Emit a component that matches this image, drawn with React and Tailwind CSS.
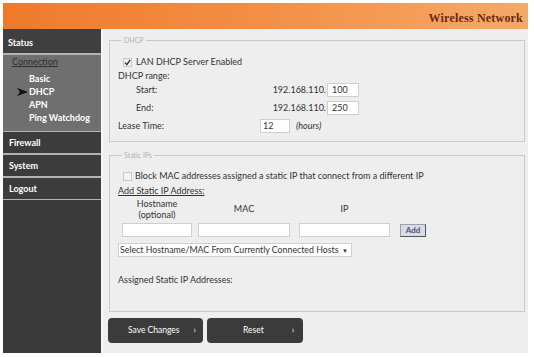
export default function App() {
  const Check = ({ checked }) => (
    <span className="w-[9px] h-[9px] border border-[#c8c8c8] bg-[#f2f2f2] flex items-center justify-center shrink-0">
      {checked && (
        <svg width="7" height="7" viewBox="0 0 7 7">
          <path d="M1 3.6 L2.8 5.6 L6.2 0.8" stroke="#333" strokeWidth="1.4" fill="none" />
        </svg>
      )}
    </span>
  );
  const Box = ({ className, children }) => (
    <div className={"bg-white border border-[#cfcfcf] h-[14px] flex items-center " + className}>{children}</div>
  );
  return (
    <div className="w-[534px] h-[357px] bg-white pt-[3px] pl-[3px] font-['Lato',sans-serif] text-[#333] text-[9px]">
      <div className="w-[525px] h-[350px] flex flex-col">
        <header className="h-[26px] shrink-0 bg-gradient-to-r from-[#ef7a2b] via-[#f38f45] to-[#f5a967] flex items-center justify-end pr-[5px] pt-[3px]">
          <span className="font-['Liberation_Serif',serif] font-bold text-[12px] text-[#6b2a12] tracking-[0.2px]">Wireless Network</span>
        </header>
        <div className="flex flex-1 min-h-0">
          <aside className="w-[98px] bg-[#3a3a3a] flex flex-col font-bold text-white">
            <div className="h-[24px] bg-[#3f3f3f] flex items-center pl-[5px] pt-[3px]">Status</div>
            <div className="h-[2px] bg-[#b3b3b3]" />
            <div className="h-[76px] bg-[#6f6f6f] pt-[1px]">
              <div className="leading-[12px] pl-[9px] font-normal text-[#2e2e2e] underline">Connection</div>
              <div className="mt-[4px] leading-[13px]">
                <div className="pl-[26px]">Basic</div>
                <div className="flex items-center pl-[14px]">
                  <svg width="11" height="8" viewBox="0 0 11 8" className="mr-[1px]">
                    <path d="M0 0 L11 4 L0 8 L3 4 Z" fill="#111" />
                  </svg>
                  <span>DHCP</span>
                </div>
                <div className="pl-[26px]">APN</div>
                <div className="pl-[26px]">Ping Watchdog</div>
              </div>
            </div>
            <div className="h-[1px] bg-[#b3b3b3]" />
            <div className="h-[21px] bg-[#3c3c3c] flex items-center pl-[6px]">Firewall</div>
            <div className="h-[2px] bg-[#b3b3b3]" />
            <div className="h-[21px] bg-[#3c3c3c] flex items-center pl-[6px]">System</div>
            <div className="h-[2px] bg-[#b3b3b3]" />
            <div className="h-[21px] bg-[#3c3c3c] flex items-center pl-[6px]">Logout</div>
            <div className="h-[1px] bg-[#b3b3b3]" />
          </aside>
          <div className="w-[2px] bg-[#f7f7f7]" />
          <main className="flex-1 bg-[#eeeeee] pl-[6px] pr-[3px] pt-[6px]">
            <fieldset className="border border-[#c9c9c9] pl-[8px] pb-[8px]">
              <legend className="ml-[4px] px-[2px] text-[7px] leading-[10px] text-[#b3b3b3]">DHCP</legend>
              <div className="mt-[10px] h-[14px] flex items-center pl-[5px]">
                <Check checked />
                <span className="ml-[4px]">LAN DHCP Server Enabled</span>
              </div>
              <div className="h-[13px] flex items-center">DHCP range:</div>
              <div className="mt-[1px] h-[14px] flex items-center">
                <div className="w-[209px] flex justify-between pl-[18px] pr-[1px]">
                  <span>Start:</span>
                  <span>192.168.110.</span>
                </div>
                <Box className="w-[32px] pl-[4px]">100</Box>
              </div>
              <div className="mt-[4px] h-[14px] flex items-center">
                <div className="w-[209px] flex justify-between pl-[18px] pr-[1px]">
                  <span>End:</span>
                  <span>192.168.110.</span>
                </div>
                <Box className="w-[32px] pl-[4px]">250</Box>
              </div>
              <div className="mt-[4px] h-[14px] flex items-center">
                <div className="w-[142px]">Lease Time:</div>
                <Box className="w-[30px] pl-[2px]">12</Box>
                <span className="ml-[6px] italic">(hours)</span>
              </div>
            </fieldset>
            <fieldset className="mt-[8px] border border-[#c9c9c9] pl-[8px] pb-[25px]">
              <legend className="ml-[4px] px-[2px] text-[7px] leading-[10px] text-[#b3b3b3]">Static IPs</legend>
              <div className="mt-[9px] h-[14px] flex items-center pl-[5px]">
                <Check />
                <span className="ml-[3px]">Block MAC addresses assigned a static IP that connect from a different IP</span>
              </div>
              <div className="mt-[1px] h-[13px] flex items-center underline">Add Static IP Address:</div>
              <div className="h-[23px] flex items-center pl-[4px] text-center">
                <div className="w-[70px] leading-[11px]">Hostname<br />(optional)</div>
                <div className="ml-[6px] w-[92px]">MAC</div>
                <div className="ml-[9px] w-[91px]">IP</div>
              </div>
              <div className="mt-[3px] h-[14px] flex items-center pl-[4px]">
                <Box className="w-[70px]" />
                <Box className="ml-[6px] w-[92px]" />
                <Box className="ml-[9px] w-[91px]" />
                <div className="ml-[10px] w-[26px] h-[13px] bg-[#d9dce4] border border-[#9aa0ac] border-r-[#555] border-b-[#555] text-[#4a5673] font-bold text-[8px] flex items-center justify-center">Add</div>
              </div>
              <div className="mt-[6px] w-[234px] h-[14px] bg-white border border-[#d0d0d0] flex items-center justify-between pl-[1px] pr-[3px] text-[8.8px]">
                <span>Select Hostname/MAC From Currently Connected Hosts</span>
                <span className="text-[6px]">▼</span>
              </div>
              <div className="mt-[17px] h-[12px] flex items-center">Assigned Static IP Addresses:</div>
            </fieldset>
            <div className="mt-[6px] -ml-[1px] flex gap-[4px] text-white text-[8.5px]">
              <div className="w-[95px] h-[25px] rounded-[4px] bg-[#3b3b3b] flex items-center pl-[20px]">
                <span>Save Changes</span>
                <span className="ml-[14px]">›</span>
              </div>
              <div className="w-[96px] h-[25px] rounded-[4px] bg-[#3b3b3b] flex items-center pl-[36px]">
                <span>Reset</span>
                <span className="ml-[28px]">›</span>
              </div>
            </div>
          </main>
        </div>
      </div>
    </div>
  );
}
